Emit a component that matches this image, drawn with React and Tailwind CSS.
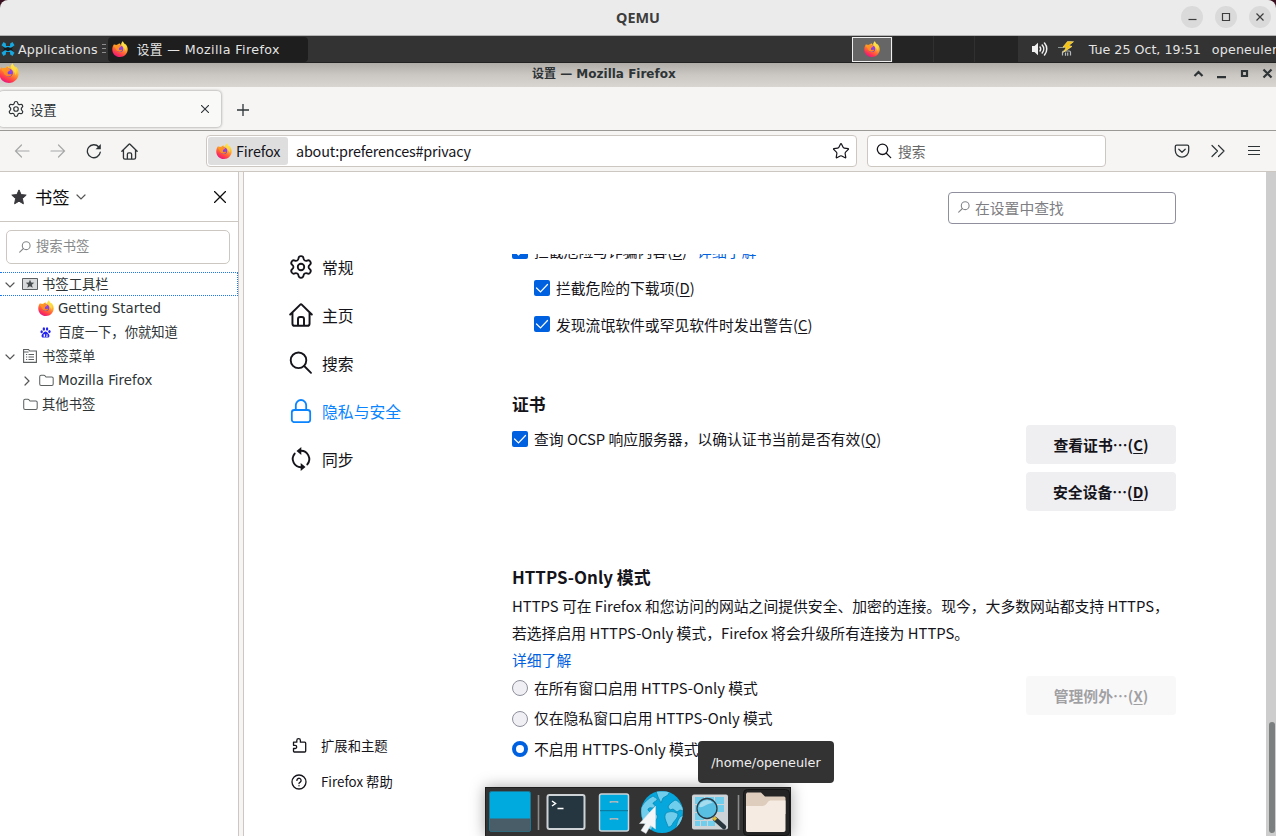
import React from 'react';
import { Settings, Star } from 'lucide-react';

const CJK = "font-['Noto_Sans_CJK_SC',sans-serif]";
const DJV = "font-['DejaVu_Sans','Noto_Sans_CJK_SC',sans-serif]";

function FirefoxLogo({ className }) {
  const id = React.useId();
  return (
    <svg viewBox="0 0 24 24" className={className}>
      <defs>
        <linearGradient id={id + 'a'} x1="0.8" y1="0.05" x2="0.3" y2="1">
          <stop offset="0" stopColor="#fff04a" />
          <stop offset="0.3" stopColor="#ffbd2e" />
          <stop offset="0.58" stopColor="#ff7033" />
          <stop offset="0.8" stopColor="#ff3750" />
          <stop offset="1" stopColor="#e31587" />
        </linearGradient>
        <linearGradient id={id + 'b'} x1="0.7" y1="0" x2="0.3" y2="1">
          <stop offset="0" stopColor="#a63ff0" />
          <stop offset="1" stopColor="#5b4bc9" />
        </linearGradient>
        <linearGradient id={id + 'c'} x1="0" y1="0" x2="1" y2="1">
          <stop offset="0" stopColor="#ffa01e" />
          <stop offset="1" stopColor="#ff7a28" />
        </linearGradient>
      </defs>
      <path fill={`url(#${id}a)`} d="M3.2 4.5c.3 1 .9 1.800 1.600 2 .8-.4 1.900-.5 2.700-.3C8.500 4.600 10 3.800 11.500 3.700c.3 1 1 1.700 2.200 2.200C13.500 3.600 14.500 1.600 16.400.2c.4 2.300 1.800 3.400 3.400 5 .3-.2.3-.7.2-1.200 2 2.100 3.600 5 3.600 8.400C23.600 18.800 18.500 24 12 24 5.400 24 .4 18.900.4 12.600.4 9.500 1.500 6.700 3.200 4.500z" />
      <circle cx="11.800" cy="11.600" r="5" fill={`url(#${id}b)`} />
      <path fill={`url(#${id}c)`} d="M3 6.500c1.500-.9 3.300-.9 4.800-.2 1-1.400 2.300-2 3.700-2.100-.8 1.200-1 2.200-.4 3.100 1 .2 2.300.1 2.500.7.100.9-1.800 1.600-2.600 2.200-.4.900-1.200 1.900-.1 2.900 1.300 1 3.200-.5 4.300.2.2 1.900-2.400 3.300-4.700 2.800-3-.5-4.900-2.700-5-5.300C3.900 9.500 3 8 3 6.500z" />
      <path fill="#ffe24a" opacity="0.75" d="M16.400.8c.5 2.600 3.400 4 4.400 8 .5 2.400 0 4.400-1 6-.1-4.300-3.900-6.100-5-8.300-.8-1.800.1-4.300 1.600-5.700z" />
    </svg>
  );
}

function Chevron({ className, d = 'M1 3l4 4 4-4' }) {
  return (
    <svg viewBox="0 0 10 10" className={className} fill="none" stroke="currentColor" strokeWidth="1.200" strokeLinecap="round"><path d={d} /></svg>
  );
}

function House({ className, sw = 1.25 }) {
  return (
    <svg viewBox="0 0 16 16" className={className} fill="none" stroke="currentColor" strokeWidth={sw} strokeLinejoin="round" strokeLinecap="round">
      <path d="M.8 7.700L7.500 1.100a.7.7 0 0 1 1 0l6.700 6.600M2.300 6.500v7.300c0 .8.6 1.400 1.400 1.400h8.600c.8 0 1.400-.6 1.400-1.400V6.500M6 15v-4.300C6 9.900 6.600 9.300 7.400 9.300h1.200c.8 0 1.400.6 1.400 1.400V15" />
    </svg>
  );
}

function Folder({ className }) {
  return (
    <svg viewBox="0 0 16 14" className={className} fill="none" stroke="#5b5f60" strokeWidth="1.100" strokeLinejoin="round">
      <path d="M.7 3c0-1 .5-1.700 1.500-1.700h3c.7 0 1 .3 1.400.8l.5.700c.3.300.5.400 1 .4h5.700c.9 0 1.400.6 1.400 1.400v6.200c0 .9-.5 1.500-1.400 1.500H2.200c-1 0-1.500-.6-1.500-1.500z" />
    </svg>
  );
}

function MirroredSearch({ className }) {
  return (
    <svg viewBox="0 0 12 12" className={className} fill="none" stroke="#84878a" strokeWidth="1.100" strokeLinecap="round">
      <circle cx="7.200" cy="4.700" r="3.900" /><path d="M4.400 7.500L.7 11.200" />
    </svg>
  );
}

function Window() {
  return (
    <header className="flex h-9 shrink-0 items-center border-b border-[#b4b4b4] bg-[#ebebeb] rounded-t-[8px] pl-[95px] pr-[5px]">
      <div className="flex-1 text-center font-['Noto_Sans',sans-serif] text-[14.4px] font-bold text-[#3d3d3d]">QEMU</div>
      <div className="flex gap-3">
        {['M7.500 13.500h8', 'M7.500 7.500h7v7h-7z', 'M7.500 7.500l7 7M14.500 7.500l-7 7'].map((d) => (
          <span key={d} className="-mt-px size-[22px] rounded-full bg-[#dadada]">
            <svg viewBox="0 0 22 22" fill="none" stroke="#3d3d3d" strokeWidth="1.200"><path d={d} /></svg>
          </span>
        ))}
      </div>
    </header>
  );
}

function Panel() {
  return (
    <div className={`flex h-[27px] shrink-0 items-center overflow-hidden border-b border-[#232323] bg-[#333] text-[12.67px] leading-4 text-[#e4e4e4] whitespace-nowrap ${DJV}`}>
      <svg viewBox="0 0 14 14" className="ml-px size-[14px] shrink-0">
        <path fill="#16a8e0" d="M.5 3.200L2.500 0l2.300 1.600L5 4h4l.2-2.400L11.500 0l2 3.200L11.200 5v4l2.300 1.800-2 3.200-2.300-1.600L9 10H5l-.2 2.400L2.500 14l-2-3.200L2.800 9V5z" />
        <path fill="#15191b" d="M2 5l2.500.8L7 5l2.200.8L12 5l-.7 2 .7 2-2.600-.8L7 9.300l-2.500-1L2 9l.7-2z" />
      </svg>
      <span className="ml-[3px] mt-[2px] w-[80px] tracking-[0.2px]">Applications</span>
      <svg viewBox="0 0 4 10" className="ml-[4px] h-[10px] w-1 shrink-0" stroke="#8c8c8c"><path d="M0 .5h4M0 4.500h4M0 8.500h4" /></svg>
      <div className="ml-[2px] flex h-[25px] w-[200px] shrink-0 items-center rounded-[4px] bg-[#1e1e1e]">
        <FirefoxLogo className="ml-1 size-4" />
        <span className="ml-[9px] mt-[2px] tracking-[0.38px]">设置 — Mozilla Firefox</span>
      </div>
      <div className="ml-[544px] flex h-[25px] w-10 shrink-0 items-center justify-center border border-[#efefef] bg-[#666]"><FirefoxLogo className="size-4" /></div>
      <div className="ml-px flex h-full w-[125px] shrink-0 bg-[#242424]">
        <span className="w-[41px] border-r border-[#303030]" /><span className="w-[41px] border-r border-[#303030]" />
      </div>
      <svg viewBox="0 0 16 14" className="ml-[14px] h-[14px] w-4 shrink-0" fill="none" stroke="#f0f0f0" strokeWidth="1.500" strokeLinecap="round">
        <path fill="#f0f0f0" stroke="none" d="M0 4h2.500L6 .8v12.400L2.500 10H0z" /><path d="M8 5c.8 1.200.8 2.800 0 4M10.200 3c2 2.300 2 5.700 0 8M12.500 1c3 3.400 3 8.600 0 12" />
      </svg>
      <svg viewBox="0 0 16 16" className="ml-[10px] size-4 shrink-0">
        <path stroke="#8d9696" fill="none" d="M0 6.500h6" />
        <path stroke="#b4bbbb" fill="none" strokeWidth="1.200" d="M4.500 14.500v-3.200c0-.8.600-1.300 1.300-1.300h5.400c.7 0 1.300.5 1.300 1.300v3.200M7.500 11.500v3.200M9.700 11.500v3.200" />
        <path fill="#f5c414" stroke="#ffe98a" strokeWidth=".6" d="M9.500.4L5 6l3.200.6-3 4.800 8.800-6-3.200-.8L15.500.7z" />
      </svg>
      <span className="ml-[15px] mt-[2px] w-[123px] shrink-0">Tue 25 Oct, 19:51</span>
      <span className="mt-[2px] shrink-0 tracking-[0.2px]">openeuler</span>
    </div>
  );
}

function TitleBar() {
  return (
    <div className={`flex h-6 shrink-0 items-center bg-linear-to-b from-[#b0aca8] via-[#cbc7c3] to-[#d9d5d1] text-[#2e3436] ${DJV}`}>
      <FirefoxLogo className="size-5 -ml-px mb-[4px] shrink-0" />
      <div className="ml-[513px] mb-[3px] flex-1 text-[12px] leading-4 font-bold whitespace-nowrap">设置 — Mozilla Firefox</div>
      <svg viewBox="0 0 80 12" className="mb-[3px] mr-[3px] h-3 w-20" fill="none" stroke="#2e3436" strokeWidth="2.200">
        <path d="M1.500 8L5.500 4l4 4M24 9.200h9M49 3h5v5h-5zM70.500 1.500l8 8M78.500 1.500l-8 8" />
      </svg>
    </div>
  );
}

function Tabs() {
  return (
    <div className={`flex h-11 shrink-0 border-b border-[#9a9996] bg-[#f6f5f4] pt-1 text-[#2e3436] ${CJK}`}>
      <div className="-ml-px flex h-[36px] w-[222px] items-center rounded-[4px] bg-[#f9f9f8] shadow-[0_0_3px_rgba(0,0,0,0.45)]">
        <Settings className="ml-[8px] size-[18px]" strokeWidth={1.600} />
        <span className="ml-[5px] mt-px flex-1 text-[13.33px] leading-5">设置</span>
        <svg viewBox="0 0 8 8" className="mr-[12px] size-2" fill="none" stroke="currentColor" strokeWidth="1.100"><path d="M0 0l8 8M8 0L0 8" /></svg>
      </div>
      <svg viewBox="0 0 12 12" className="ml-[15.5px] mt-[12.5px] size-3" stroke="currentColor" strokeWidth="1.300"><path d="M6 0v12M0 6h12" /></svg>
    </div>
  );
}

function NavBar() {
  return (
    <div className={`flex h-[41px] shrink-0 items-center border-b border-[#cdc7c2] bg-[#f6f5f4] text-[14.4px] text-[#15141a] ${CJK}`}>
      <svg viewBox="0 0 16 16" className="ml-[14px] size-4 shrink-0" fill="none" stroke="#a6a8a8" strokeWidth="1.200" strokeLinecap="round"><path d="M15 8H1.500M7.500 2l-6 6 6 6" /></svg>
      <svg viewBox="0 0 16 16" className="ml-5 size-4 shrink-0" fill="none" stroke="#a6a8a8" strokeWidth="1.200" strokeLinecap="round"><path d="M1 8h13.500M8.500 2l6 6-6 6" /></svg>
      <svg viewBox="0 0 16 16" className="ml-5 size-4 shrink-0" fill="none" stroke="#2e3436" strokeWidth="1.300" strokeLinecap="round"><path d="M14.300 9.200A6.500 6.500 0 1 1 12.800 4" /><path fill="#2e3436" stroke="none" d="M14.800 1v5.200H9.600z" /></svg>
      <House className="ml-[19px] size-[17px] shrink-0 text-[#2e3436]" />
      <div className="ml-[68px] flex h-8 w-[651px] shrink-0 items-center rounded-[4px] border border-[#cdc7c2] bg-white p-px">
        <div className="flex h-7 w-[80px] items-center rounded-[3px] bg-[#dedede]">
          <FirefoxLogo className="ml-2 size-4 shrink-0" /><span className="ml-[4px] tracking-[-0.15px]">Firefox</span>
        </div>
        <span className="ml-[8px] flex-1 tracking-[-0.19px]">about:preferences#privacy</span>
        <Star className="mr-[5px] size-[18px]" strokeWidth={1.600} />
      </div>
      <div className="ml-[10px] flex h-8 w-[239px] shrink-0 items-center rounded-[4px] border border-[#cdc7c2] bg-white">
        <svg viewBox="0 0 16 16" className="ml-[8px] size-4" fill="none" stroke="currentColor" strokeWidth="1.300" strokeLinecap="round"><circle cx="6.500" cy="6.300" r="5.200" /><path d="M10.300 10.200l4.400 4.400" /></svg>
        <span className="ml-[6px] text-[13.8px] text-[#666]">搜索</span>
      </div>
      <svg viewBox="0 0 16 16" className="ml-[68px] size-4 shrink-0" fill="none" stroke="#2e3436" strokeWidth="1.300" strokeLinecap="round" strokeLinejoin="round"><path d="M2.700 2.200h10.600c.8 0 1.400.6 1.400 1.400V7.500a6.700 6.700 0 0 1-13.400 0V3.600c0-.8.600-1.400 1.400-1.400zM4.800 6.200L8 9.300l3.200-3.100" /></svg>
      <svg viewBox="0 0 16 16" className="ml-5 size-4 shrink-0" fill="none" stroke="#2e3436" strokeWidth="1.200" strokeLinecap="round" strokeLinejoin="round"><path d="M2 2.500L7.500 8 2 13.500M8.500 2.500L14 8l-5.500 5.500" /></svg>
      <svg viewBox="0 0 12 12" className="ml-[22px] size-3 shrink-0" stroke="#2e3436" strokeWidth="1.200"><path d="M0 1.500h12M0 5.500h12M0 9.500h12" /></svg>
    </div>
  );
}

const row = 'flex h-6 items-center';

function Sidebar() {
  return (
    <aside className="flex w-[239px] shrink-0 flex-col border-r border-[#cdc7c2] bg-white">
      <div className={`flex h-[50px] items-center border-b border-[#cdc7c2] text-[17.3px] text-[#0c0c0d] ${CJK}`}>
        <svg viewBox="0 0 16 16" className="ml-[11px] size-4 text-[#38383d]" fill="currentColor" stroke="currentColor" strokeLinejoin="round"><path d="M8 .9l2.100 4.700 5.100.5-3.800 3.500 1 5.200L8 12.200l-4.400 2.600 1-5.200L.8 6.100l5.100-.5z" /></svg>
        <span className="ml-[8px]">书签</span>
        <Chevron className="ml-[6px] mt-px size-[10px] flex-none text-[#555]" />
        <span className="flex-1" />
        <svg viewBox="0 0 12 12" className="mr-[12px] size-3" fill="none" stroke="#0c0c0d" strokeWidth="1.300" strokeLinecap="round"><path d="M.5.5l11 11M11.500.5l-11 11" /></svg>
      </div>
      <div className={`mx-[6px] mt-2 flex h-[34px] w-[224px] items-center rounded-[5px] border border-[#cdc7c2] text-[13.33px] text-[#868889] ${CJK}`}>
        <MirroredSearch className="ml-[12px] mt-[-1px] size-[12px]" /><span className="ml-[5px] mb-[2px]">搜索书签</span>
      </div>
      <div className={`mt-2 text-[13.33px] leading-5 text-[#2e3436] ${DJV}`}>
        <div className={`${row} border border-l-0 border-dotted border-[#1c78e8]`}>
          <Chevron className="ml-[5px] mt-[2px] size-[10px] text-[#555]" />
          <svg viewBox="0 0 16 12" className="ml-[7px] h-3 w-4"><path fill="#d9dadb" stroke="#5b5f60" d="M.5.500h15v11H.5z" /><path fill="#4a4e50" d="M8 1.800l1.200 2.800 3 .2-2.300 2 .8 3L8 8.200 5.300 9.800l.8-3-2.300-2 3-.2z" /></svg>
          <span className="ml-[4px] mt-[2px]">书签工具栏</span>
        </div>
        <div className={row}><FirefoxLogo className="ml-[38px] size-4" /><span className="ml-1 mt-[2px]">Getting Started</span></div>
        <div className={row}>
          <svg viewBox="0 0 12 12" className="ml-[40px] size-[11px]" fill="#2424f0"><ellipse cx="1.800" cy="5.200" rx="1.300" ry="1.700" /><ellipse cx="4.200" cy="2.200" rx="1.300" ry="1.800" /><ellipse cx="7.700" cy="2.200" rx="1.300" ry="1.800" /><ellipse cx="10.300" cy="5" rx="1.300" ry="1.700" /><path fillRule="evenodd" d="M6 5c1.600 0 2.200 1.500 3.200 2.400C11 9 10.500 11.500 8.500 11.500h-5C1.500 11.500 1 9 2.800 7.400 3.800 6.500 4.400 5 6 5zM4 8v2.500h1.500V8zM6.700 8v2.500h1.600V8H7.800v1.700H7.200V8z" /></svg>
          <span className="ml-[7px] mt-[2px]">百度一下，你就知道</span>
        </div>
        <div className={row}>
          <Chevron className="ml-[5px] mt-[2px] size-[10px] text-[#555]" />
          <svg viewBox="0 0 14 14" className="ml-[8px] size-[14px]" fill="none" stroke="#5b5f60" strokeWidth="1.100"><path d="M.6 12.500v-12h4.800l1.300 1.500h6.700v11.400H.6zM.6 3h5M3 5.500h1.200M5.500 5.500H11M3 8h1.200M5.500 8H11M3 10.500h1.200M5.500 10.500H11" /></svg>
          <span className="ml-[5px] mt-[2px]">书签菜单</span>
        </div>
        <div className={row}><Chevron d="M3 1l4 4-4 4" className="ml-[22px] mt-px size-[10px] text-[#555]" /><Folder className="ml-[7px] h-[13px] w-[15px]" /><span className="ml-[4px] mt-[2px]">Mozilla Firefox</span></div>
        <div className={row}><Folder className="ml-[23px] h-[13px] w-[15px]" /><span className="ml-[4px] mt-[2px]">其他书签</span></div>
      </div>
    </aside>
  );
}

function Check({ children, k, link, className, textClass = 'mb-[2px]' }) {
  return (
    <div className={`flex items-center h-6 whitespace-nowrap ${className}`}>
      <svg viewBox="0 0 16 16" className="size-4 shrink-0"><rect width="16" height="16" rx="2" fill="#0061e0" /><path d="M2.500 8l4 4 7-7.500" fill="none" stroke="#fff" strokeWidth="1.200" strokeLinecap="round" /></svg>
      <span className={`ml-[6px] ${textClass}`}>{children}(<u className="underline-offset-2">{k}</u>)</span>
      {link && <a className="ml-[10px] mb-[2px] text-[#0061e0]">{link}</a>}
    </div>
  );
}

function Radio({ children, on, className = '' }) {
  return (
    <label className={`flex items-center h-6 whitespace-nowrap ${className}`}>
      <span className={on ? 'size-4 rounded-full border-4 border-[#0061e0] bg-white' : 'size-4 rounded-full border border-[#8f8f9d] bg-[#f0f0f4]'} />
      <span className="ml-[6px] mb-[2px]">{children}</span>
    </label>
  );
}

function Btn({ children, k, className = '' }) {
  return (
    <button className={`h-[39px] w-[150px] shrink-0 rounded-[4px] bg-[#efeff2] pb-px font-bold ${className}`}>
      {children}…(<u className="underline-offset-2">{k}</u>)
    </button>
  );
}

function Categories() {
  const items = [
    ['常规', <Settings className="size-[26px] -mx-px" strokeWidth={1.700} />],
    ['主页', <House className="size-6" sw={1.300} />],
    ['搜索', <svg viewBox="0 0 24 24" className="size-6" fill="none" stroke="currentColor" strokeWidth="1.900" strokeLinecap="round"><circle cx="9.500" cy="9.300" r="7.800" /><path d="M15.200 15l6.800 6.800" /></svg>],
    ['隐私与安全', <svg viewBox="0 0 24 24" className="size-6" fill="none" stroke="currentColor" strokeWidth="1.800"><rect x="2.800" y="11" width="18.400" height="12.200" rx="2.500" /><path d="M6.800 11V6.200a5.200 5.200 0 0 1 10.400 0V11" /></svg>],
    ['同步', <svg viewBox="0 0 24 24" className="size-6" fill="none" stroke="currentColor" strokeWidth="1.900" strokeLinecap="round"><path d="M5.700 6.600A8.300 8.300 0 0 0 12.500 20.200M18.300 17.400A8.300 8.300 0 0 0 11.500 3.800" /><path fill="currentColor" stroke="none" d="M12.300 0v8L7.500 4zM11.700 16v8l4.800-4z" /></svg>],
  ];
  return (
    <nav className="flex w-[224px] flex-col text-[15.84px]">
      {items.map(([t, icon], i) => (
        <div key={t} className={`flex h-12 items-center ${i === 3 ? 'text-[#0a84ff]' : ''}`}>{icon}<span className="ml-[9px]">{t}</span></div>
      ))}
      <div className="mt-[244px] flex h-9 items-center text-[13.33px]">
        <svg viewBox="0 0 16 16" className="ml-[3px] size-4" fill="none" stroke="currentColor" strokeWidth="1.300" strokeLinejoin="round"><path d="M1.500 5.200h3.300V3.400a1.800 1.800 0 0 1 3.600 0v1.800h4.300c.6 0 1 .4 1 1v7.800c0 .6-.4 1-1 1h-10c-.7 0-1.200-.5-1.200-1.100v-2.400h1.600a1.500 1.500 0 0 0 0-3.200H1.500z" /></svg>
        <span className="ml-[13px]">扩展和主题</span>
      </div>
      <div className="flex h-9 items-center text-[13.33px]">
        <svg viewBox="0 0 16 16" className="ml-[1.5px] mt-px size-4" fill="none" stroke="currentColor" strokeWidth="1.300" strokeLinecap="round"><circle cx="8" cy="8" r="7" /><path d="M5.900 6.400a2.100 2.100 0 1 1 3.300 1.700c-.8.500-1.200.8-1.200 1.500M8 11.600v.2" /></svg>
        <span className="ml-[14.5px]">Firefox 帮助</span>
      </div>
    </nav>
  );
}

function Preferences() {
  return (
    <main className={`flex flex-1 flex-col bg-white text-[14.82px] leading-[27px] text-[#15141a] ${CJK}`}>
      <div className="flex h-[71px] shrink-0 justify-end pt-5 pr-[90px]">
        <div className="flex h-8 w-[228px] items-center rounded-[4px] border border-[#8f8f9d] text-[#7e7e83]"><MirroredSearch className="ml-[9px] -mt-[3px] size-3" /><span className="ml-[5px] mb-[2px]">在设置中查找</span></div>
      </div>
      <div className="flex pl-[45px]">
        <Categories />
        <section className="mt-[11px] h-[582px] w-[664px] overflow-hidden ml-[-1px]">
          <Check className="-mt-[15px]" k="B" link="详细了解">拦截危险与诈骗内容</Check>
          <Check className="ml-[22px] mt-[13px]" k="D">拦截危险的下载项</Check>
          <Check className="ml-[22px] mt-[12px]" k="C" textClass="">发现流氓软件或罕见软件时发出警告</Check>
          <h2 className="mt-[55px] text-[16.8px] font-bold leading-[27px]">证书</h2>
          <div className="mt-[7px] flex h-[86px] justify-between">
            <Check className="mt-[2px]" k="Q">查询 OCSP 响应服务器，以确认证书当前是否有效</Check>
            <div className="flex flex-col gap-2"><Btn k="C">查看证书</Btn><Btn k="D">安全设备</Btn></div>
          </div>
          <h2 className="mt-[52px] text-[16.9px] font-bold leading-[27px]">HTTPS-Only 模式</h2>
          <p className="mt-[2px] whitespace-nowrap">HTTPS 可在 Firefox 和您访问的网站之间提供安全、加密的连接。现今，大多数网站都支持 HTTPS，<br />若选择启用 HTTPS-Only 模式，Firefox 将会升级所有连接为 HTTPS。</p>
          <a className="block text-[#0061e0]">详细了解</a>
          <div className="flex justify-between">
            <div className="mt-[3px] flex flex-col gap-[6.500px]">
              <Radio>在所有窗口启用 HTTPS-Only 模式</Radio>
              <Radio>仅在隐私窗口启用 HTTPS-Only 模式</Radio>
              <Radio on>不启用 HTTPS-Only 模式</Radio>
            </div>
            <Btn k="X" className="mt-[3px] opacity-40">管理例外</Btn>
          </div>
        </section>
      </div>
    </main>
  );
}

function Dock() {
  return (
    <div className="absolute left-[485px] top-[787px] flex h-[49px] w-[306px] items-center border border-b-0 border-[#1e1e1e] bg-[#333] shadow-[0_0_14px_rgba(0,0,0,0.35)]">
      <svg viewBox="0 0 304 48" className="h-12 w-[304px]">
        <rect x="3.500" y="3.500" width="41" height="40" rx="2" fill="#00aade" stroke="#1b7693" /><path d="M4 30.500h40V42a1.500 1.500 0 0 1-1.500 1.500h-37A1.500 1.500 0 0 1 4 42z" fill="#495d68" />
        <path d="M52.500 7v35M252.500 7v35" stroke="#8c8c8c" strokeWidth="1.600" />
        <rect x="61.500" y="7" width="37" height="34" rx="2" fill="#263640" stroke="#ced3d7" strokeWidth="2" />
        <path d="M66 13l3.500 2.500-3.500 2.500M71.500 20.500h6" fill="none" stroke="#fff" strokeWidth="1.500" />
        <rect x="113.500" y="6" width="29" height="37" rx="2" fill="#00aade" stroke="#ced3d7" strokeWidth="1.500" />
        <path d="M114 22.700h28" stroke="#0b7398" /><path d="M124.500 15v-1.200h7V15M124.500 32v-1.200h7V32" stroke="#a9b6bc" strokeWidth="1.600" fill="none" />
        <clipPath id="globe"><circle cx="176" cy="24" r="21" /></clipPath>
        <circle cx="176" cy="24" r="21" fill="#06a7dc" />
        <g clipPath="url(#globe)" fill="#70cdeb" stroke="#0789b5" strokeWidth=".8">
          <path d="M155 20c3-6 7-9 12-12 2 2 5 2 4 4-2 2-4 2-4 4 3 0 2 3 0 4-2 0-3-1-5 1 0 3 3 3 6 4 5 2 4 5 1 8-2 2-2 6-4 10-7-4-11-14-10-23z" />
          <path d="M170 3h14l-2 4-5 3-2 5-3-6zM182 19c1-3 4-5 7-7 4 1 7 5 9 11l-4-1-3 2-4-3-3 1zM180 25c4-2 8-2 12 1 0 4-3 6-5 9-1 3-3 4-5 4-1-5-5-9-2-14zM195 28h3c-1 5-4 10-9 14 2-5 2-10 6-14z" />
        </g>
        <path d="M169.500 18v23l-5-3.500-4.500 8-5-3 4.500-7h-6z" fill="#f3f5f7" stroke="#d6dce0" strokeWidth=".5" />
        <rect x="206" y="6.500" width="36" height="35" rx="2" fill="#ced3d7" />
        <path fill="#70cdeb" d="M209 9h9v7h-9zM219 9h9v7h-9zM229 9h9v7h-9zM209 17h9v7h-9zM229 17h9v7h-9zM209 25h9v7h-9zM209 33h5v5h-5zM215 33h6v5h-6zM222 33h7v5h-7z" />
        <path d="M229 31l9 8" stroke="#29363d" strokeWidth="4.500" strokeLinecap="round" /><path d="M227.500 29.500l2.500 2.300" stroke="#e3bd32" strokeWidth="3.500" />
        <circle cx="221" cy="20.500" r="10" fill="#58bfe3" stroke="#283b46" strokeWidth="1.300" /><path d="M213 19a8 8 0 0 1 14-4c-6 0-9 5-14 4z" fill="#a4dced" />
        <rect x="257.500" y="1.500" width="46" height="46" rx="4" fill="#242424" stroke="#151515" />
        <path d="M261 4.500h14l4 4h19a1.500 1.500 0 0 1 1.500 1.500v16H260V6z" fill="#decdbd" />
        <path d="M260 18h16c3 0 4-1.500 5.500-3.500 1-1.500 2-2 4-2h14V42c0 1-.7 2-2 2h-36c-1 0-1.500-1-1.500-2z" fill="#f6ebe2" />
      </svg>
    </div>
  );
}

export default function App() {
  return (
    <div lang="zh-CN" className="relative flex h-[836px] w-[1276px] flex-col overflow-hidden bg-[#38101f]">
      <Window />
      <Panel />
      <TitleBar />
      <Tabs />
      <NavBar />
      <div className="flex flex-1 overflow-hidden">
        <Sidebar />
        <div className="w-[5px] shrink-0 border-r border-[#cdc7c2] bg-[#f6f5f4]" />
        <Preferences />
        <div className="flex w-[10px] shrink-0 items-end justify-end bg-[#cdcdcd] pr-px pb-[3px]"><span className="h-[111px] w-[6px] rounded-full bg-[#7b7f80]" /></div>
      </div>
      <Dock />
      <div className={`absolute left-[698px] top-[741px] flex h-[42px] w-[136px] items-center justify-center rounded-[4px] bg-[#333] pt-px text-[12.8px] text-[#eee] ${DJV}`}>/home/openeuler</div>
    </div>
  );
}
